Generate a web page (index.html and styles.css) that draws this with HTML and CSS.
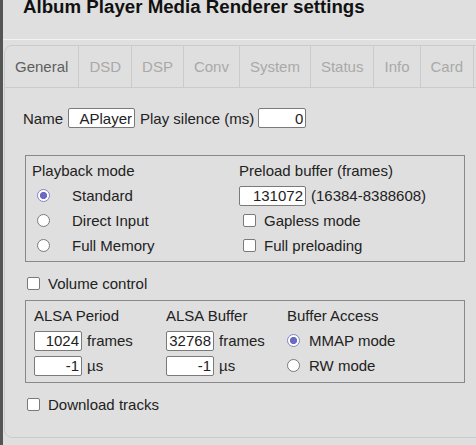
FILE: index.html
```html
<!DOCTYPE html>
<html lang="en">
<head>
<meta charset="utf-8">
<title>Album Player Media Renderer settings</title>
<link rel="stylesheet" href="styles.css">
</head>
<body>
<div class="page">
  <header class="head">
    <h1 class="title">Album Player Media Renderer settings</h1>
  </header>
  <section class="panel">
    <nav class="tabs">
      <span class="tab active">General</span>
      <span class="tab">DSD</span>
      <span class="tab">DSP</span>
      <span class="tab">Conv</span>
      <span class="tab">System</span>
      <span class="tab">Status</span>
      <span class="tab">Info</span>
      <span class="tab">Card</span>
      <span class="tab last"></span>
    </nav>
    <div class="content">
      <div class="row1">
        <span>Name</span>
        <input class="num w67" type="text" value="APlayer">
        <span>Play silence (ms)</span>
        <input class="num w48 tight" type="text" value="0">
      </div>

      <div class="box box1">
        <div class="cell">Playback mode</div>
        <div class="cell">Preload buffer (frames)</div>

        <label class="cell opt"><input class="radio" type="radio" name="pm" checked><span>Standard</span></label>
        <div class="cell inl"><input class="num w67" type="text" value="131072"><span>(16384-8388608)</span></div>

        <label class="cell opt"><input class="radio" type="radio" name="pm"><span>Direct Input</span></label>
        <label class="cell chk"><input class="check" type="checkbox"><span>Gapless mode</span></label>

        <label class="cell opt"><input class="radio" type="radio" name="pm"><span>Full Memory</span></label>
        <label class="cell chk"><input class="check" type="checkbox"><span>Full preloading</span></label>
      </div>

      <label class="line chk vol"><input class="check" type="checkbox"><span>Volume control</span></label>

      <div class="box box2">
        <div class="cell">ALSA Period</div>
        <div class="cell">ALSA Buffer</div>
        <div class="cell">Buffer Access</div>

        <div class="cell inl"><input class="num w48 nudge" type="text" value="1024"><span>frames</span></div>
        <div class="cell inl"><input class="num w48 nudge" type="text" value="32768"><span>frames</span></div>
        <label class="cell opt2"><input class="radio" type="radio" name="ba" checked><span>MMAP mode</span></label>

        <div class="cell inl"><input class="num w48 nudge" type="text" value="-1"><span>µs</span></div>
        <div class="cell inl"><input class="num w48 nudge" type="text" value="-1"><span>µs</span></div>
        <label class="cell opt2"><input class="radio" type="radio" name="ba"><span>RW mode</span></label>
      </div>

      <label class="line chk dl"><input class="check" type="checkbox"><span>Download tracks</span></label>
    </div>
  </section>
</div>
</body>
</html>
```

FILE: styles.css
```css
html, body {
  margin: 0;
  padding: 0;
  overflow: hidden;
  background: #dfdfdf;
}

body {
  font-family: "Liberation Sans", Arial, sans-serif;
  font-size: 15px;
  color: #222;
}

.page {
  border-left: 3px solid #555;
  min-height: 445px;
  box-sizing: border-box;
}

.head {
  height: 39px;
  border-bottom: 1px solid #f2f2f2;
  box-sizing: content-box;
  padding-left: 20px;
}

.title {
  margin: 0;
  font-size: 18.7px;
  font-weight: bold;
  line-height: 13px;
  color: #111;
}

.panel {
  margin: 5px -40px 0 1px;
  border: 1px solid #cbcbcb;
  border-radius: 8px;
}

.tabs {
  display: flex;
  height: 41px;
  border-bottom: 1px solid #cbcbcb;
}

.tab {
  padding: 0 10px;
  line-height: 41px;
  border-right: 1px solid #cbcbcb;
  color: #a9a9a9;
}

.tab.active {
  color: #5e5e5e;
}

.tab.last {
  border-right: none;
}

.content {
  padding: 20px 0 23px 18px;
}

.row1 {
  display: flex;
  align-items: center;
  gap: 5px;
  height: 20px;
}

.row1 .tight {
  margin-left: -1px;
}

input.num {
  box-sizing: border-box;
  height: 20px;
  margin: 0;
  padding: 1px 2px;
  border: 1px solid #7a7a7a;
  border-radius: 2px;
  background: #fff;
  font-family: "Liberation Sans", Arial, sans-serif;
  font-size: 15px;
  color: #222;
  text-align: right;
  outline: none;
}

.w67 { width: 67px; }
.w48 { width: 48px; }

.box {
  display: grid;
  grid-auto-rows: 25px;
  align-items: center;
  border: 1px solid #888;
  width: 440px;
  box-sizing: border-box;
  margin-left: 2px;
}

.box1 {
  margin-top: 27px;
  grid-template-columns: 207px auto;
  padding: 2px 0 3px 6px;
}

.box2 {
  margin-top: 7px;
  grid-template-columns: 132px 121px auto;
  padding: 2px 0 4px 8px;
}

.cell {
  white-space: nowrap;
}

.opt, .chk, .inl, .opt2 {
  display: flex;
  align-items: center;
}

.opt .radio {
  margin: 0 22px 0 5px;
}

.opt2 .radio {
  margin: 0 9px 0 0;
}

.chk .check {
  margin: 0 8px 0 4px;
}

.inl {
  gap: 5px;
}

.nudge {
  margin-left: 1px;
}

.line {
  height: 20px;
}

.vol {
  margin-top: 11px;
}

.dl {
  margin-top: 11px;
}

.radio {
  appearance: none;
  -webkit-appearance: none;
  width: 13px;
  height: 13px;
  border: 1px solid #7a7a7a;
  border-radius: 50%;
  background: #fff;
  box-sizing: border-box;
  flex: none;
}

.radio:checked {
  border-color: #8585c6;
  background: radial-gradient(circle, #6a6ac4 0 3.3px, #fff 3.9px);
}

.check {
  appearance: none;
  -webkit-appearance: none;
  width: 13px;
  height: 13px;
  border: 1px solid #7a7a7a;
  border-radius: 2px;
  background: #fff;
  box-sizing: border-box;
  flex: none;
}
```
